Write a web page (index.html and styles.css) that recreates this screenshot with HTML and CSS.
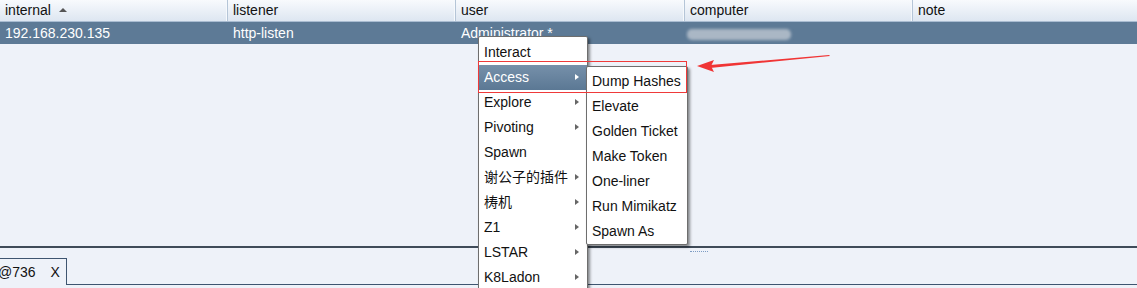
FILE: index.html
```html
<!DOCTYPE html>
<html lang="en">
<head>
  <meta charset="UTF-8" />
  <title>Beacons</title>
  <link rel="stylesheet" href="styles.css">
</head>
<body>
  <div class="app">
    <div class="table">
      <div class="thead">
        <div class="th">internal <span class="sort"></span></div>
        <div class="th">listener</div>
        <div class="th">user</div>
        <div class="th">computer</div>
        <div class="th">note</div>
      </div>
      <div class="tr selected">
        <div class="td">192.168.230.135</div>
        <div class="td">http-listen</div>
        <div class="td">Administrator *</div>
        <div class="td"><span class="blurred"></span></div>
        <div class="td"></div>
      </div>
    </div>

    <div class="split"><span class="grip"></span></div>

    <div class="tabs">
      <div class="tab">@736 <span class="close">X</span></div>
      <div class="tab-rest"></div>
    </div>

    <ul class="menu main-menu">
      <li>Interact</li>
      <li class="active sub">Access</li>
      <li class="sub">Explore</li>
      <li class="sub">Pivoting</li>
      <li>Spawn</li>
      <li class="sub">谢公子的插件</li>
      <li class="sub">梼机</li>
      <li class="sub">Z1</li>
      <li class="sub">LSTAR</li>
      <li class="sub">K8Ladon</li>
    </ul>

    <ul class="menu sub-menu">
      <li>Dump Hashes</li>
      <li>Elevate</li>
      <li>Golden Ticket</li>
      <li>Make Token</li>
      <li>One-liner</li>
      <li>Run Mimikatz</li>
      <li>Spawn As</li>
    </ul>

    <div class="mark"></div>
    <svg class="arrow" width="150" height="30" viewBox="0 0 150 30">
      <polygon points="139,5 140,6 20,18 20,15" fill="#f03535"/>
      <polygon points="7,16 24,10 21,16 24,22" fill="#f03535"/>
    </svg>
  </div>
</body>
</html>
```

FILE: styles.css
```css
html, body {
  margin: 0;
  height: 100%;
  overflow: hidden;
}
body {
  background: #eef2f9;
  font-family: "Liberation Sans", "Noto Sans CJK SC", Arial, sans-serif;
  font-size: 14px;
  color: #111;
}
.app {
  position: relative;
  height: 288px;
  display: flex;
  flex-direction: column;
}
.table {
  height: 246px;
}
.thead, .tr {
  display: grid;
  grid-template-columns: 228px 228px 229px 228px 1fr;
}
.thead {
  height: 21px;
  background: linear-gradient(#f8fafd, #dde6f1);
  border-bottom: 1px solid #a9bcd1;
}
.th {
  padding-left: 5px;
  line-height: 21px;
  border-right: 1px solid #b5c5d7;
  box-shadow: inset -1px 0 0 #f6f9fc;
  display: flex;
  align-items: center;
}
.th:last-child {
  border-right: none;
  box-shadow: none;
}
.sort {
  margin-left: 8px;
  width: 0;
  height: 0;
  border-left: 4px solid transparent;
  border-right: 4px solid transparent;
  border-bottom: 4px solid #555;
  margin-top: -2px;
}
.tr {
  height: 22px;
  line-height: 22px;
}
.selected {
  background: #5d7a96;
  color: #fff;
}
.td {
  padding-left: 5px;
  white-space: nowrap;
  overflow: hidden;
}
.blurred {
  display: inline-block;
  width: 104px;
  height: 11px;
  margin-left: -3px;
  vertical-align: middle;
  background: #aab7c5;
  border-radius: 5px;
  filter: blur(1.5px);
}
.split {
  height: 2px;
  background: #3f4b59;
  position: relative;
}
.grip {
  position: absolute;
  left: 690px;
  top: 5px;
  width: 18px;
  height: 1px;
  border-top: 1px dotted #7d9cc3;
}
.tabs {
  display: flex;
  margin-top: 10px;
  height: 28px;
}
.tab {
  width: 68px;
  height: 26px;
  line-height: 26px;
  border: 1px solid #3e5570;
  border-left: none;
  border-bottom: none;
  margin-left: -2px;
  white-space: nowrap;
}
.close {
  margin-left: 11px;
}
.tab-rest {
  flex: 1;
  border-bottom: 1px solid #3e5570;
  height: 26px;
}
.menu {
  position: absolute;
  margin: 0;
  padding: 2px 0 0 0;
  list-style: none;
  background: #fff;
  border: 1px solid #6e6e6e;
  border-radius: 2px;
  box-shadow: 2px 2px 3px rgba(0, 0, 0, 0.45);
}
.menu li {
  height: 25px;
  line-height: 25px;
  white-space: nowrap;
  position: relative;
}
.main-menu {
  left: 478px;
  top: 36px;
  width: 108px;
  height: 260px;
  padding-top: 3px;
}
.main-menu li {
  padding-left: 5px;
}
.main-menu .sub::after {
  content: "";
  position: absolute;
  right: 8px;
  top: 9px;
  border-top: 3px solid transparent;
  border-bottom: 3px solid transparent;
  border-left: 4px solid #666;
}
.main-menu .active {
  background: linear-gradient(#7690aa, #5b7894);
  color: #fff;
}
.main-menu .active::after {
  border-left-color: #fff;
}
.sub-menu {
  left: 586px;
  top: 66px;
  width: 100px;
  height: 175px;
}
.sub-menu li {
  padding-left: 5px;
}
.mark {
  position: absolute;
  left: 478px;
  top: 61px;
  width: 207px;
  height: 30px;
  border: 1px solid #ef3a3a;
}
.arrow {
  position: absolute;
  left: 690px;
  top: 50px;
}
```
